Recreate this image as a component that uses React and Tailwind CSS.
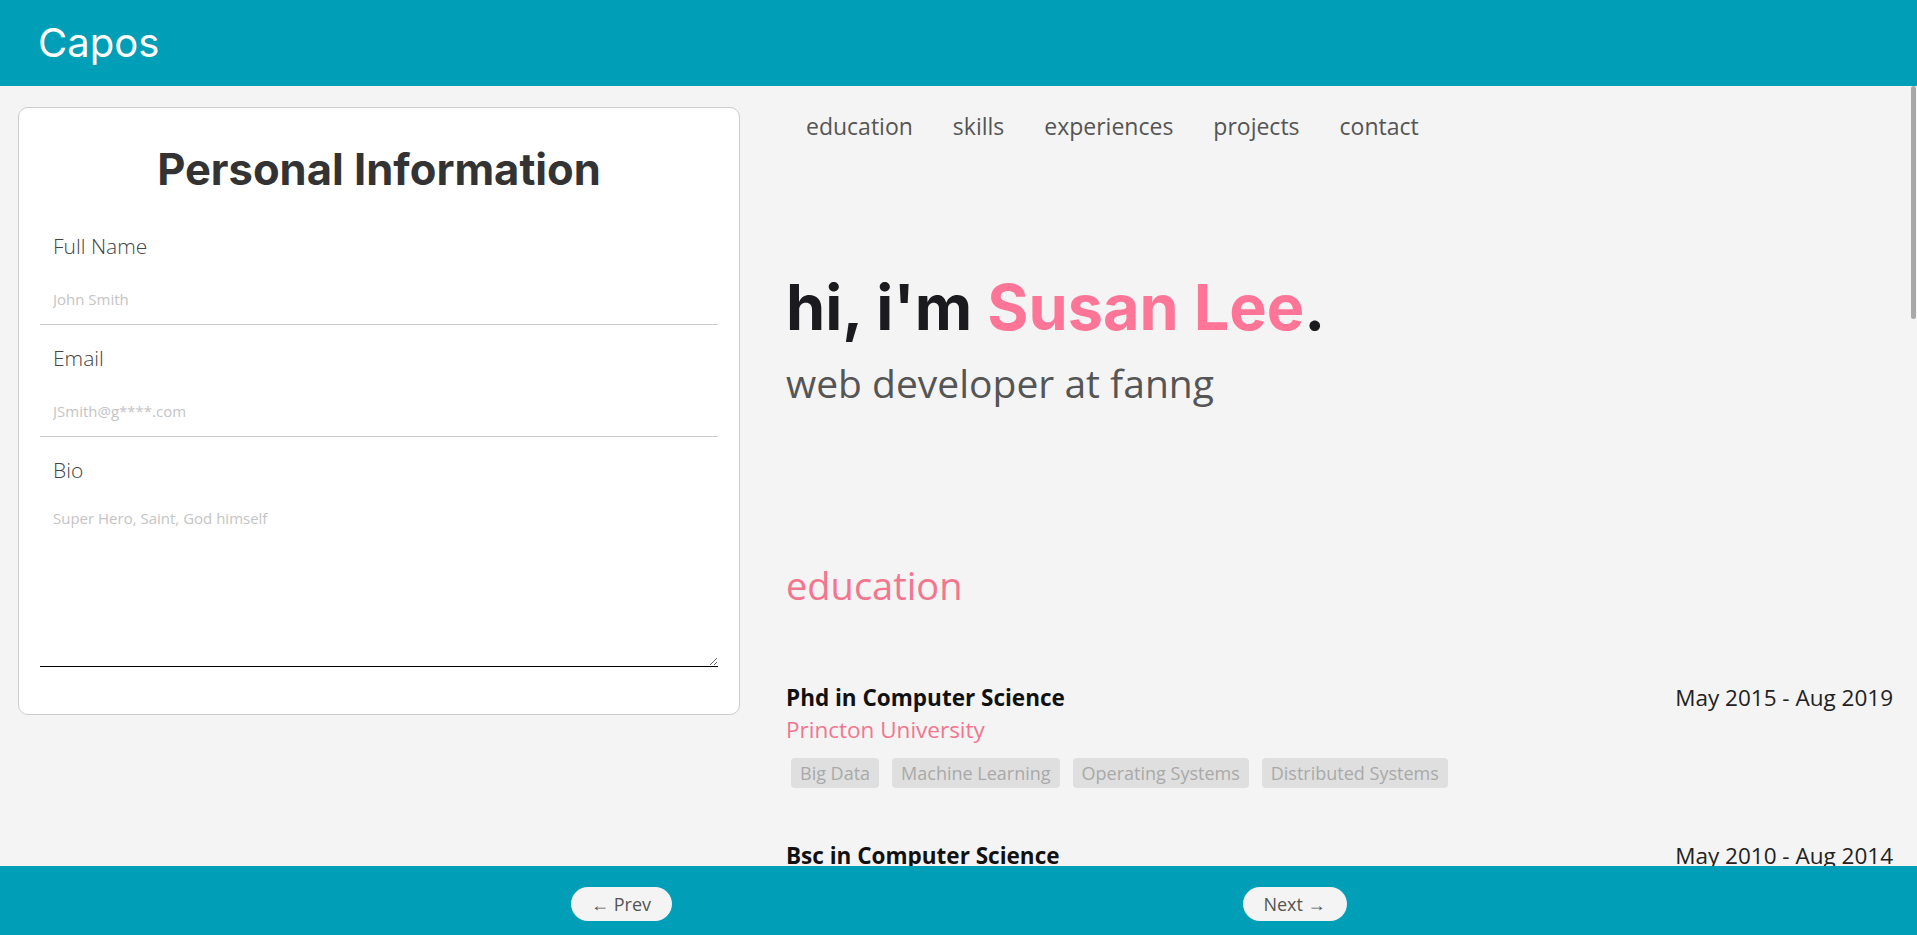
import { useState } from "react";

const education = [
  {
    degree: "Phd in Computer Science",
    school: "Princton University",
    dates: "May 2015 - Aug 2019",
    tags: ["Big Data", "Machine Learning", "Operating Systems", "Distributed Systems"],
  },
  {
    degree: "Bsc in Computer Science",
    school: "Princton University",
    dates: "May 2010 - Aug 2014",
    tags: ["Algorithms", "Data Structures", "Networks"],
  },
];

const navItems = ["education", "skills", "experiences", "projects", "contact"];

function Field({ label, placeholder }) {
  return (
    <label className="block border-b border-[#cccccc]">
      <span className="block pl-[13px] pt-[18px] text-[21px] leading-[30px] font-light text-[#444]">
        {label}
      </span>
      <input
        type="text"
        placeholder={placeholder}
        className="block w-full bg-transparent pl-[13px] pt-[28px] pb-[15px] text-[15px] leading-[20px] text-[#333] outline-none placeholder:text-[#c4c4c4]"
      />
    </label>
  );
}

function EducationItem({ item }) {
  return (
    <div className="mb-[53px]">
      <div className="flex items-baseline justify-between">
        <h3 className="text-[22.5px] leading-[30px] font-bold text-[#111]">{item.degree}</h3>
        <span className="text-[22.5px] leading-[30px] text-[#222]">{item.dates}</span>
      </div>
      <p className="mt-[2px] text-[22.5px] leading-[30px] text-[#f3768f]">{item.school}</p>
      <div className="mt-[13px] flex flex-wrap gap-[13px] pl-[5px]">
        {item.tags.map((t) => (
          <span
            key={t}
            className="rounded-[4px] bg-[#dfdfdf] px-[9px] text-[18px] leading-[30px] text-[#a9a9a9]"
          >
            {t}
          </span>
        ))}
      </div>
    </div>
  );
}

export default function App() {
  const [bio, setBio] = useState("");

  return (
    <div className="flex h-[935px] flex-col overflow-hidden bg-[#f4f4f4] font-['Open_Sans','Noto_Sans',sans-serif]">
      <header className="flex h-[86px] shrink-0 items-center bg-[#009fb7] pl-[38px]">
        <h1 className="font-['Inter',sans-serif] text-[40px] leading-none text-white">Capos</h1>
      </header>

      <main className="relative flex min-h-0 flex-1">
        <aside className="w-[758px] shrink-0 px-[18px] pt-[21px]">
          <form className="rounded-[10px] border border-[#cccccc] bg-white px-[21px] pb-[47px] pt-[37px]">
            <h2 className="text-center font-['Inter',sans-serif] text-[43.5px] leading-[48px] font-bold text-[#333]">
              Personal Information
            </h2>
            <div className="mt-[20px]">
              <Field label="Full Name" placeholder="John Smith" />
              <Field label="Email" placeholder="JSmith@g****.com" />
              <label className="block">
                <span className="block pl-[13px] pt-[18px] text-[21px] leading-[30px] font-light text-[#444]">
                  Bio
                </span>
                <textarea
                  value={bio}
                  onChange={(e) => setBio(e.target.value)}
                  placeholder="Super Hero, Saint, God himself"
                  className="block h-[182px] w-full resize-y border-b border-black bg-transparent pl-[13px] pt-[23px] text-[15px] leading-[20px] text-[#333] outline-none placeholder:text-[#c4c4c4]"
                />
              </label>
            </div>
          </form>
        </aside>

        <section className="min-w-0 flex-1 overflow-y-auto pl-[28px] pr-[24px]">
          <div className="min-h-[2611px]">
            <nav className="flex gap-[40px] pl-[20px] pt-[25px] text-[23px] leading-[30px] text-[#555]">
              {navItems.map((n) => (
                <a key={n} href={`#${n}`}>
                  {n}
                </a>
              ))}
            </nav>

            <div className="pt-[130px]">
              <h1 className="font-['Inter',sans-serif] text-[63px] leading-[72px] font-bold text-[#1a1a1f]">
                hi, i'm <span className="text-[#ff7597]">Susan Lee</span>.
              </h1>
              <p className="mt-[16px] text-[39px] leading-[48px] text-[#555]">web developer at fanng</p>
            </div>

            <div id="education" className="pt-[155px]">
              <h2 className="text-[38px] leading-[46px] text-[#f3768f]">education</h2>
              <div className="mt-[75px]">
                {education.map((e) => (
                  <EducationItem key={e.degree} item={e} />
                ))}
              </div>
            </div>

            <div id="skills" className="pt-[60px]">
              <h2 className="text-[38px] leading-[46px] text-[#f3768f]">skills</h2>
            </div>
          </div>
        </section>

        {/* scrollbar thumb of the right column */}
        <div className="pointer-events-none absolute right-[1px] top-0 h-[233px] w-[5px] rounded-full bg-[#a8a8a8]" />
      </main>

      <footer className="flex h-[69px] shrink-0 items-start justify-center gap-[571px] bg-[#009fb7] pt-[21px]">
        <button type="button" className="h-[34px] w-[101px] rounded-full bg-[#f4f4f4] text-[18px] text-[#555]">
          ← Prev
        </button>
        <button type="button" className="h-[34px] w-[104px] rounded-full bg-[#f4f4f4] text-[18px] text-[#555]">
          Next →
        </button>
      </footer>
    </div>
  );
}
